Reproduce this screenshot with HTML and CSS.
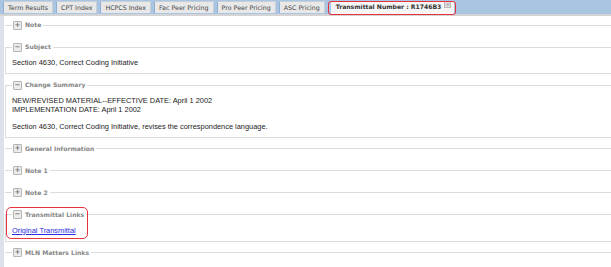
FILE: index.html
```html
<!DOCTYPE html>
<html lang="en">
<head>
  <meta charset="UTF-8">
  <title>Transmittal Number : R1746B3</title>
  <link rel="stylesheet" href="styles.css">
</head>
<body>

  <div class="tabbar">
    <div class="tab">Term Results</div>
    <div class="tab">CPT Index</div>
    <div class="tab">HCPCS Index</div>
    <div class="tab">Fac Peer Pricing</div>
    <div class="tab">Pro Peer Pricing</div>
    <div class="tab">ASC Pricing</div>
    <div class="tab active">Transmittal Number : R1746B3 <span class="close">×</span></div>
  </div>

  <div class="content">
    <fieldset class="closed">
      <legend><span class="toggle">+</span>Note</legend>
    </fieldset>

    <fieldset>
      <legend><span class="toggle">−</span>Subject</legend>
      <p>Section 4630, Correct Coding Initiative</p>
    </fieldset>

    <fieldset>
      <legend><span class="toggle">−</span>Change Summary</legend>
      <p>NEW/REVISED MATERIAL--EFFECTIVE DATE: April 1 2002<br>
      IMPLEMENTATION DATE: April 1 2002<br><br>
      Section 4630, Correct Coding Initiative, revises the correspondence language.</p>
    </fieldset>

    <fieldset class="closed">
      <legend><span class="toggle">+</span>General Information</legend>
    </fieldset>

    <fieldset class="closed">
      <legend><span class="toggle">+</span>Note 1</legend>
    </fieldset>

    <fieldset class="closed">
      <legend><span class="toggle">+</span>Note 2</legend>
    </fieldset>

    <fieldset class="links">
      <legend><span class="toggle">−</span>Transmittal Links</legend>
      <p><a href="#">Original Transmittal</a></p>
    </fieldset>

    <fieldset class="closed">
      <legend><span class="toggle">+</span>MLN Matters Links</legend>
    </fieldset>

    <!-- red callout from the screenshot -->
    <div class="mark mark-links"></div>
  </div>

</body>
</html>
```

FILE: styles.css
```css
body {
  margin: 0;
  background: #fff;
  font-family: "Liberation Sans", Arial, sans-serif;
  overflow: hidden;
  position: relative;
  height: 267px;
}

/* tab strip */
.tabbar {
  display: flex;
  gap: 3px;
  height: 16px;
  padding: 1px 0 0 3px;
  background: #a9c5e1;
  border-bottom: 2px solid #d4d4d4;
  box-sizing: border-box;
}

.tab {
  height: 12px;
  line-height: 12px;
  padding: 0 4px;
  background: #e8e8e8;
  border: 1px solid #c9cfd6;
  border-left-color: #8fb0d2;
  border-bottom: none;
  box-sizing: border-box;
  font-family: "DejaVu Sans", Verdana, sans-serif;
  font-size: 6.3px;
  color: #444;
  white-space: nowrap;
}

.tab.active {
  position: relative;
  background: #f6f6f6;
  font-weight: bold;
  font-size: 6.1px;
  color: #333;
  margin-left: 3px;
  padding: 0 3px 0 5px;
  height: 13px;
  border: none;
}

/* red callout round the open tab */
.tab.active::after {
  content: "";
  position: absolute;
  left: -3px;
  right: -2px;
  top: 0;
  bottom: -1px;
  border: 1.5px solid #e8323c;
  border-radius: 3px;
}

.close {
  display: inline-block;
  width: 5px;
  height: 5px;
  line-height: 5px;
  margin-left: 1px;
  vertical-align: 3px;
  font-size: 5px;
  text-align: center;
  color: #888;
  background: #ddd;
  border: 1px solid #bbb;
  font-weight: normal;
}

/* fieldsets */
.content {
  border-left: 4px solid #dbe2ea;
  padding: 4px 0 0 1px;
  min-height: 260px;
}

fieldset {
  margin: 0 -4px 6px 0;
  padding: 0 0 5.5px 6px;
  border: 1px solid #dcdcdc;
  border-right: none;
}

fieldset.closed {
  border-width: 1px 0 0 0;
  padding-bottom: 6px;
  padding-left: 7px;
}

legend {
  padding: 0 2px 0 1px;
  height: 10px;
  line-height: 10px;
  font-family: "DejaVu Sans", Verdana, sans-serif;
  font-weight: bold;
  font-size: 6.1px;
  color: #868686;
  display: flex;
  align-items: center;
  gap: 3px;
}

.toggle {
  display: inline-block;
  width: 7px;
  height: 7px;
  line-height: 7px;
  text-align: center;
  border: 1px solid #b5b5b5;
  border-radius: 1px;
  background: #ececec;
  color: #777;
  font-size: 7px;
  font-weight: bold;
}

fieldset p {
  margin: 7px 0 0;
  font-size: 7.4px;
  line-height: 8.5px;
  color: #222;
}

fieldset a {
  color: #2a2ae0;
}

/* annotations */
.mark {
  position: absolute;
  border: 1.5px solid #e8323c;
  border-radius: 5px;
}

.mark-links {
  left: 6px;
  top: 207px;
  width: 80px;
  height: 30px;
}
```
